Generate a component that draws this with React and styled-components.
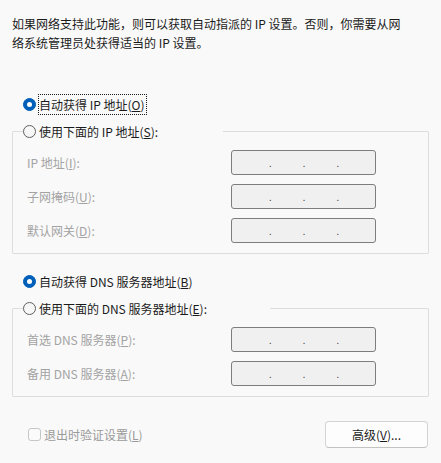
import React from 'react';
import styled, { createGlobalStyle } from 'styled-components';

const GlobalStyle = createGlobalStyle`
  html, body {
    margin: 0;
    padding: 0;
    background: #f9f9f9;
  }
  body {
    font-family: "Noto Sans CJK SC", "Noto Sans", sans-serif;
    font-size: 12px;
    color: #1b1b1b;
  }
`;

const Page = styled.div`
  width: 441px;
  height: 463px;
  box-sizing: border-box;
  display: flex;
  flex-direction: column;
  background: #f9f9f9;
`;

const Intro = styled.p`
  margin: 14px 0 0 12px;
  line-height: 19px;
  color: #1b1b1b;
`;

const RadioRow = styled.label`
  display: flex;
  align-items: center;
  gap: 3px;
  height: 20px;
  padding-left: ${p => p.$indent || 0}px;
  margin-top: ${p => p.$top || 0}px;
  white-space: nowrap;
`;

const Radio = styled.span`
  box-sizing: border-box;
  flex: none;
  width: 13px;
  height: 13px;
  border-radius: 50%;
  display: flex;
  align-items: center;
  justify-content: center;
  background: ${p => (p.$checked ? '#005fb8' : '#f7f7f7')};
  border: 1px solid ${p => (p.$checked ? '#005fb8' : '#5f5f5f')};

  &::after {
    content: '';
    display: ${p => (p.$checked ? 'block' : 'none')};
    width: 5px;
    height: 5px;
    border-radius: 50%;
    background: #ffffff;
  }
`;

const Focus = styled.span`
  outline: 1px dotted #1b1b1b;
  outline-offset: 0;
  padding: 1px 1px 1px 0;
`;

const Group = styled.fieldset`
  margin: 7px 12px 0 12px;
  padding: 0;
  border: 1px solid #dddddd;
  border-radius: 1px;
  min-width: 0;
`;

const Legend = styled.legend`
  padding: 0;
  margin-left: 10px;
  width: ${p => p.$width}px;
`;

const Fields = styled.div`
  display: grid;
  grid-template-columns: 204px 145px;
  row-gap: 9px;
  padding: 9px 0 10px 14px;
  align-items: center;
`;

const FieldLabel = styled.span`
  color: #a3a3a3;
  white-space: nowrap;
`;

const AddressBox = styled.div`
  box-sizing: border-box;
  height: 25px;
  border: 1px solid #7d7d7d;
  border-radius: 3px;
  background: #f0f0f0;
  display: grid;
  grid-template-columns: 1fr 3px 1fr 3px 1fr 3px 1fr;
  align-items: center;
  padding: 0 5px 0 6px;
  color: #4a4a4a;
  font-family: "Liberation Sans", Arial, sans-serif;
  font-size: 11px;
  line-height: 1;
`;

const Dot = styled.span`
  text-align: center;
  padding-top: 2px;
`;

const Footer = styled.div`
  display: flex;
  align-items: center;
  justify-content: space-between;
  margin: 24px 13px 0 28px;
`;

const CheckRow = styled.label`
  display: flex;
  align-items: center;
  gap: 3px;
  color: #9a9a9a;
`;

const CheckBox = styled.span`
  box-sizing: border-box;
  width: 13px;
  height: 13px;
  border: 1px solid #c6c6c6;
  border-radius: 3px;
  background: #fbfbfb;
`;

const Button = styled.button`
  box-sizing: border-box;
  width: 103px;
  height: 27px;
  border: 1px solid #d3d3d3;
  border-bottom-color: #c2c2c2;
  border-radius: 4px;
  background: #fdfdfd;
  font-family: inherit;
  font-size: 12px;
  color: #1b1b1b;
  padding: 0;
`;

const Key = ({ k }) => (
  <>
    (<u>{k}</u>)
  </>
);

const Address = () => (
  <AddressBox>
    <span />
    <Dot>.</Dot>
    <span />
    <Dot>.</Dot>
    <span />
    <Dot>.</Dot>
    <span />
  </AddressBox>
);

const ipFields = [
  { label: 'IP 地址', key: 'I' },
  { label: '子网掩码', key: 'U' },
  { label: '默认网关', key: 'D' },
];

const dnsFields = [
  { label: '首选 DNS 服务器', key: 'P' },
  { label: '备用 DNS 服务器', key: 'A' },
];

const FieldList = ({ items }) => (
  <Fields>
    {items.map(f => (
      <React.Fragment key={f.key}>
        <FieldLabel>
          {f.label}
          <Key k={f.key} />:
        </FieldLabel>
        <Address />
      </React.Fragment>
    ))}
  </Fields>
);

export default function App() {
  return (
    <Page>
      <GlobalStyle />
      <Intro>
        如果网络支持此功能，则可以获取自动指派的 IP 设置。否则，你需要从网
        <br />
        络系统管理员处获得适当的 IP 设置。
      </Intro>

      <RadioRow $indent={23} $top={42}>
        <Radio $checked />
        <Focus>
          自动获得 IP 地址<Key k="O" />
        </Focus>
      </RadioRow>

      <Group>
        <Legend $width={200}>
          <RadioRow>
            <Radio />
            <span>
              使用下面的 IP 地址<Key k="S" />:
            </span>
          </RadioRow>
        </Legend>
        <FieldList items={ipFields} />
      </Group>

      <RadioRow $indent={23} $top={17}>
        <Radio $checked />
        <span>
          自动获得 DNS 服务器地址<Key k="B" />
        </span>
      </RadioRow>

      <Group>
        <Legend $width={247}>
          <RadioRow>
            <Radio />
            <span>
              使用下面的 DNS 服务器地址<Key k="E" />:
            </span>
          </RadioRow>
        </Legend>
        <FieldList items={dnsFields} />
      </Group>

      <Footer>
        <CheckRow>
          <CheckBox />
          <span>
            退出时验证设置<Key k="L" />
          </span>
        </CheckRow>
        <Button>
          高级<Key k="V" />...
        </Button>
      </Footer>
    </Page>
  );
}
